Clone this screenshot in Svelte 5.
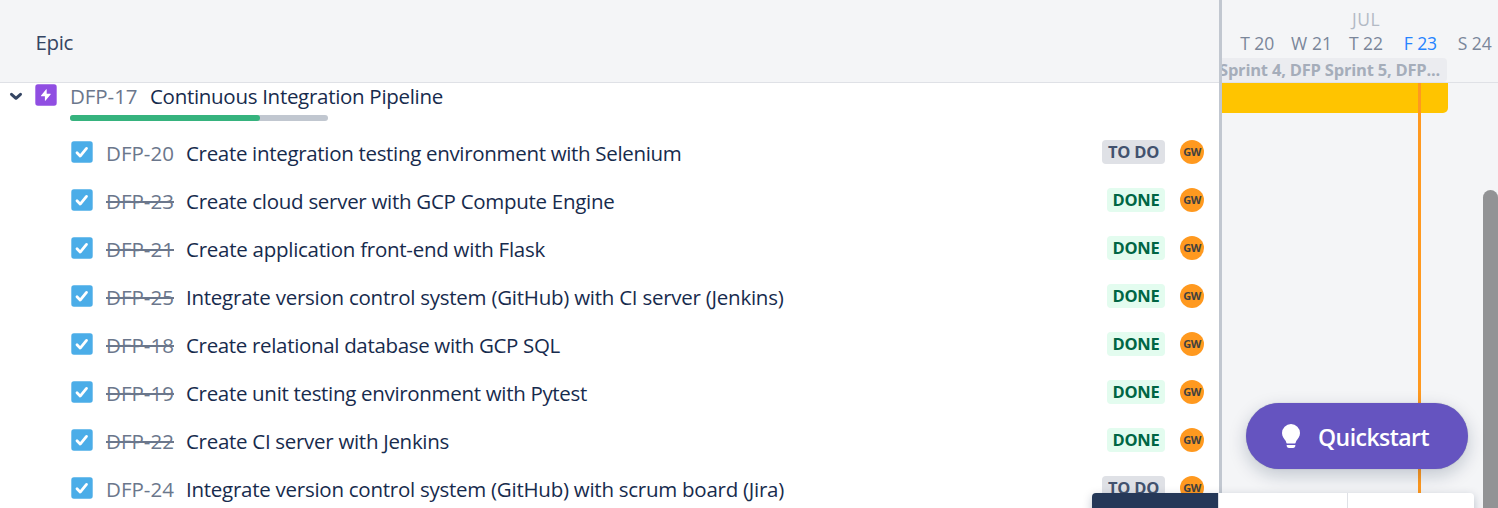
<script>
  const tasks = [
    { id: 20, name: 'Create integration testing environment with Selenium', done: false, width: 495.5 },
    { id: 23, name: 'Create cloud server with GCP Compute Engine', done: true, width: 428.5 },
    { id: 21, name: 'Create application front-end with Flask', done: true, width: 359 },
    { id: 25, name: 'Integrate version control system (GitHub) with CI server (Jenkins)', done: true, width: 597.5 },
    { id: 18, name: 'Create relational database with GCP SQL', done: true, width: 374 },
    { id: 19, name: 'Create unit testing environment with Pytest', done: true, width: 401 },
    { id: 22, name: 'Create CI server with Jenkins', done: true, width: 263 },
    { id: 24, name: 'Integrate version control system (GitHub) with scrum board (Jira)', done: false, width: 598 },
  ];
  const days = ['T 20', 'W 21', 'T 22', 'F 23', 'S 24'];
  const dayWidths = [34, 41, 34, 33, 34];

  // Tracks the label so that it occupies the given width in any installed font.
  function fit(node, width) {
    const natural = node.getBoundingClientRect().width;
    node.style.letterSpacing = `${(width - natural) / node.textContent.length}px`;
  }
</script>

<main class="roadmap">
  <section class="list">
    <header><span use:fit={37.5}>Epic</span></header>
    <div class="epic">
      <svg class="chevron" width="14" height="10" viewBox="0 0 14 10"><path d="M2.500 2.300 7 6.300l4.500-4" fill="none" stroke="#344563" stroke-width="3" stroke-linecap="round" stroke-linejoin="round" /></svg>
      <svg class="bolt" width="22" height="22" viewBox="0 0 22 22"><rect x=".3" y=".3" width="21.400" height="21.400" rx="2.600" fill="#904ee2" /><path d="M11.700 5.600v4.100h3.500c.5 0 .7.5.4.9l-5 6c-.3.300-.7.2-.7-.2v-4.100H6.500c-.5 0-.7-.5-.4-.9l4.900-6c.3-.3.700-.2.700.2z" fill="#fff" /></svg>
      <div class="epic-body">
        <div class="title"><span class="key"><span use:fit={67.5}>DFP-17</span></span><span use:fit={293}>Continuous Integration Pipeline</span></div>
        <div class="progress"><i></i></div>
      </div>
    </div>
    {#each tasks as task}
      <div class="task">
        <svg class="check" width="22" height="22" viewBox="0 0 22 22"><rect x=".3" y=".3" width="21.400" height="21.400" rx="2.600" fill="#4bade8" /><path d="m6 11.700 3.200 3.400 6.300-7.700" fill="none" stroke="#fff" stroke-width="2.800" stroke-linecap="round" stroke-linejoin="round" /></svg>
        <span class="key" class:struck={task.done}><span use:fit={68}>DFP-{task.id}</span></span>
        <span class="name"><span use:fit={task.width}>{task.name}</span></span>
        <span class="status" class:done={task.done}><span use:fit={task.done ? 47 : 51}>{task.done ? 'DONE' : 'TO DO'}</span></span>
        <span class="avatar"><span use:fit={17.5}>GW</span></span>
      </div>
    {/each}
  </section>
  <div class="divider"></div>
  <section class="timeline">
    <header>
      <div class="month"><span use:fit={28}>JUL</span></div>
      <div class="days">
        {#each days as day, i}
          <span class:today={day === 'F 23'}><span use:fit={dayWidths[i]}>{day}</span></span>
        {/each}
      </div>
      <div class="sprints"><span use:fit={221}>Sprint 4, DFP Sprint 5, DFP...</span></div>
    </header>
    <div class="chart"><div class="bar"></div></div>
    <div class="now"></div>
    <div class="scroll"></div>
  </section>
  <button>
    <svg width="20" height="26" viewBox="0 0 20 26"><path d="M10 1a9 9 0 0 0-9 9c0 3.600 2.200 5.600 3.600 7.800.6 1 .6 2.800 1.400 2.800h8c.8 0 .8-1.800 1.400-2.800C16.800 15.600 19 13.600 19 10a9 9 0 0 0-9-9z" fill="#fff" /><path d="M5.600 22h8.800c0 1.900-1 3-2.400 3H8c-1.400 0-2.400-1.100-2.400-3z" fill="#fff" /></svg>
    <span use:fit={111}>Quickstart</span>
  </button>
  <div class="switcher"><i class="active"></i><i></i><i></i></div>
</main>

<style>
  :global(body) { overflow: hidden; }
  .roadmap { position: relative; display: grid; grid-template-columns: 1219px 3px 276px; width: 1498px; height: 508px; overflow: hidden; background: #fff; font-family: "Open Sans", "Noto Sans", sans-serif; font-size: 20.500px; color: #172b4d; white-space: nowrap; }
  header { box-sizing: border-box; height: 83px; background: #f4f5f7; border-bottom: 1px solid #dfe1e6; }
  .list { height: 508px; overflow: hidden; }
  .list header { padding: 29px 35.500px; line-height: 26px; color: #344563; font-size: 20.500px; }
  .epic { display: flex; height: 45px; }
  .chevron { margin: 9px 0 0 9px; }
  .bolt { margin: 1px 0 0 12px; }
  .epic-body { margin-left: 13px; }
  .title { display: flex; height: 32px; line-height: 26px; }
  .title .key { width: 80px; }
  .key { color: #6b778c; }
  .progress { width: 258px; height: 6px; border-radius: 3px; background: #c1c7d0; }
  .progress i { display: block; width: 190px; height: 6px; border-radius: 3px; background: #36b37e; }
  .task { display: flex; align-items: center; height: 48px; padding-left: 71px; }
  .task .key { width: 80px; margin-left: 13px; padding-top: 2px; }
  .struck > span { text-decoration: line-through 2px; }
  .name { flex: 1; padding-top: 2px; }
  .status { box-sizing: border-box; height: 24px; padding: 0 5.500px; border-radius: 4px; background: #dfe1e6; color: #42526e; font-size: 16.500px; font-weight: 700; line-height: 24px; }
  .status:not(.done) { padding: 0 6px; }
  .status.done { background: #e3fcef; color: #006644; }
  .avatar { display: flex; align-items: center; justify-content: center; box-sizing: border-box; width: 24px; height: 24px; margin: 0 15px; padding-bottom: 1px; border-radius: 50%; background: #ff991f; color: #42413f; font-size: 11px; font-weight: 700; }
  .divider { background: #c1c7d0; }
  .timeline { position: relative; height: 508px; overflow: hidden; background: #f4f5f7; }
  .month { height: 30px; padding: 7px 0 0 130px; box-sizing: border-box; color: #b3bac5; font-size: 17.500px; line-height: 25px; }
  .days { display: grid; grid-template-columns: repeat(5, 54.400px); height: 28px; margin-left: 8px; line-height: 26px; color: #7a869a; font-size: 17.500px; text-align: center; }
  .today { color: #2684ff; }
  .sprints { width: 225px; height: 24px; border-radius: 0 4px 4px 0; background: #ebecf0; color: #a5adba; font-size: 16.500px; font-weight: 700; line-height: 24px; }
  .sprints span { margin-left: -3px; }
  .bar { width: 226px; height: 30px; border-radius: 0 0 5px 0; background: #ffc400; }
  .now { position: absolute; left: 196px; top: 83px; bottom: 0; width: 3px; background: #ff991f; }
  .scroll { position: absolute; left: 261px; top: 190px; width: 15px; height: 340px; border-radius: 8px; background: #929395; }
  button { position: absolute; left: 1246px; top: 403px; display: flex; align-items: center; width: 222px; height: 66px; padding: 0 0 0 35px; border: 0; border-radius: 33px; background: #6554c0; color: #fff; font: 600 23px "Open Sans", sans-serif; box-shadow: 0 6px 18px #091e4238, 0 0 1px #091e4260; }
  button span { margin: 2px 0 0 17px; }
  .switcher { position: absolute; left: 1092px; top: 493px; display: grid; grid-template-columns: 126px 129px 127px; width: 382px; height: 40px; border-radius: 4px; overflow: hidden; background: #fff; box-shadow: 0 3px 10px #091e4240; }
  .switcher i { border-left: 1px solid #dfe1e6; }
  .switcher .active { border: 0; background: #253858; }
</style>
